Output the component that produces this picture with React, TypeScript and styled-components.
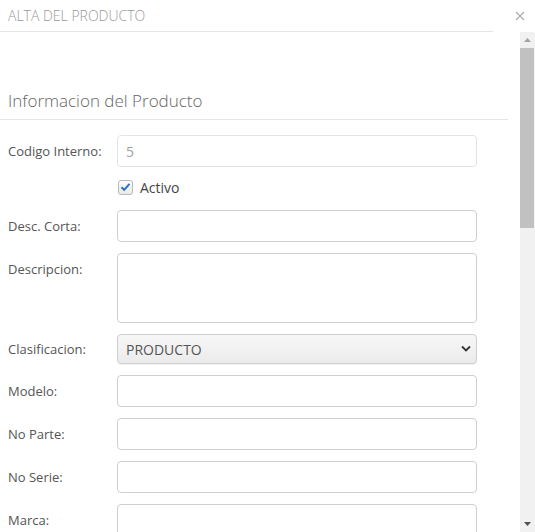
import React from "react";
import styled, { createGlobalStyle } from "styled-components";

const Global = createGlobalStyle`
  html, body { margin: 0; padding: 0; background: #fff; }
  body { font-family: "Open Sans", "Liberation Sans", sans-serif; color: #444; overflow: hidden; }
  * { box-sizing: border-box; }
`;

const Modal = styled.div`
  width: 535px;
  height: 532px;
  display: flex;
  flex-direction: column;
  background: #fff;
`;

const Header = styled.div`
  display: flex;
  height: 32px;
  flex: 0 0 32px;
`;

const HeaderTitle = styled.div`
  flex: 0 0 493px;
  border-bottom: 1px solid #e5e5e5;
  padding-left: 8px;
  font-size: 14px;
  font-weight: 300;
  color: #999;
  line-height: 31px;
`;

const Close = styled.button`
  flex: 1;
  border: 0;
  background: transparent;
  display: flex;
  align-items: center;
  justify-content: flex-end;
  padding: 0 10px 0 0;
  color: #aaa;
`;

const Main = styled.div`
  flex: 1;
  display: flex;
  min-height: 0;
`;

const Body = styled.div`
  flex: 1;
  overflow: hidden;
  padding: 0 12px 37px 0;
`;

const ScrollBar = styled.div`
  flex: 0 0 15px;
  display: flex;
  flex-direction: column;
  background: #f1f1f1;
`;

const ScrollButton = styled.div`
  flex: 0 0 16px;
  display: flex;
  align-items: center;
  justify-content: center;
`;

const Track = styled.div`
  flex: 1;
  display: flex;
  flex-direction: column;
`;

const Thumb = styled.div`
  height: 180px;
  margin: 0 1px 0 0;
  background: #c1c1c1;
`;

const Section = styled.div`
  padding-top: 56px;
`;

const SectionTitle = styled.h4`
  margin: 0 0 15px 0;
  padding: 0 0 5px 8px;
  border-bottom: 1px solid #e5e5e5;
  font-size: 17px;
  font-weight: 300;
  color: #666;
  line-height: 26px;
`;

const Row = styled.div`
  display: flex;
  align-items: flex-start;
  margin-bottom: 11px;
`;

const Label = styled.label<{ $h?: number }>`
  flex: 0 0 117px;
  padding-left: 8px;
  font-size: 13px;
  line-height: ${(p) => p.$h ?? 32}px;
  color: #555;
`;

const Input = styled.input<{ $readonly?: boolean }>`
  width: 360px;
  height: 32px;
  border: 1px solid ${(p) => (p.$readonly ? "#e3e3e3" : "#cfcfcf")};
  border-radius: 4px;
  padding: 0 8px;
  font-family: inherit;
  font-size: 14px;
  color: ${(p) => (p.$readonly ? "#a0a0a0" : "#444")};
  background: #fff;
  outline: none;
`;

const TextArea = styled.textarea`
  width: 360px;
  height: 70px;
  border: 1px solid #cfcfcf;
  border-radius: 4px;
  padding: 6px 8px;
  font-family: inherit;
  font-size: 14px;
  resize: none;
  outline: none;
`;

const SelectWrap = styled.div`
  position: relative;
  width: 360px;
  height: 30px;
`;

const Select = styled.select`
  width: 100%;
  height: 30px;
  appearance: none;
  -webkit-appearance: none;
  border: 1px solid #cfcfcf;
  border-radius: 4px;
  background: linear-gradient(#f7f7f7, #ebebeb);
  box-shadow: 0 1px 1px rgba(0,0,0,0.06);
  padding: 0 8px;
  font-family: inherit;
  font-size: 14px;
  color: #555;
  outline: none;
`;

const Chevron = styled.svg`
  position: absolute;
  right: 6px;
  top: 11px;
  pointer-events: none;
`;

const CheckRow = styled.div`
  display: flex;
  align-items: center;
  padding-left: 118px;
  height: 18px;
  margin-bottom: 14px;
`;

const Box = styled.span`
  width: 15px;
  height: 15px;
  border: 1px solid #b9b9b9;
  border-radius: 3px;
  background: linear-gradient(#fdfdfd, #e9e9e9);
  display: flex;
  align-items: center;
  justify-content: center;
  margin-right: 7px;
`;

const CheckText = styled.span`
  font-size: 14px;
  color: #444;
`;

const fields1 = ["Modelo:", "No Parte:", "No Serie:", "Marca:", "Unidad:", "Ubicacion:"];
const fields2 = [
  "Precio 1:", "Precio 2:", "Precio 3:", "Costo:", "Impuesto:", "Stock Min.:", "Stock Max.:",
  "Existencia:", "Peso:", "Proveedor:", "Categoria:", "Linea:", "Notas:",
];

export default function App() {
  return (
    <>
      <Global />
      <Modal>
        <Header>
          <HeaderTitle>ALTA DEL PRODUCTO</HeaderTitle>
          <Close aria-label="Cerrar">
            <svg width="10" height="10" viewBox="0 0 10 10">
              <path d="M1 1L9 9M9 1L1 9" stroke="#aaa" strokeWidth="1.1" />
            </svg>
          </Close>
        </Header>
        <Main>
          <Body>
            <Section>
              <SectionTitle>Informacion del Producto</SectionTitle>
              <Row>
                <Label>Codigo Interno:</Label>
                <Input $readonly readOnly defaultValue="5" />
              </Row>
              <CheckRow>
                <Box>
                  <svg width="11" height="10" viewBox="0 0 11 10">
                    <path d="M1.5 5.2L4.2 7.8L9.5 1.8" stroke="#2f6fc0" strokeWidth="2" fill="none" />
                  </svg>
                </Box>
                <CheckText>Activo</CheckText>
              </CheckRow>
              <Row>
                <Label>Desc. Corta:</Label>
                <Input />
              </Row>
              <Row>
                <Label>Descripcion:</Label>
                <TextArea />
              </Row>
              <Row>
                <Label $h={30}>Clasificacion:</Label>
                <SelectWrap>
                  <Select defaultValue="PRODUCTO">
                    <option>PRODUCTO</option>
                    <option>SERVICIO</option>
                  </Select>
                  <Chevron width="10" height="7" viewBox="0 0 10 7">
                    <path d="M1 1.5L5 5.5L9 1.5" stroke="#333" strokeWidth="1.8" fill="none" />
                  </Chevron>
                </SelectWrap>
              </Row>
              {fields1.map((f) => (
                <Row key={f}>
                  <Label>{f}</Label>
                  <Input />
                </Row>
              ))}
            </Section>
            <Section>
              <SectionTitle>Precios e Inventario</SectionTitle>
              {fields2.map((f) => (
                <Row key={f}>
                  <Label>{f}</Label>
                  <Input />
                </Row>
              ))}
            </Section>
          </Body>
          <ScrollBar>
            <ScrollButton>
              <svg width="7" height="4" viewBox="0 0 7 4">
                <path d="M0 4L3.5 0L7 4Z" fill="#a3a3a3" />
              </svg>
            </ScrollButton>
            <Track>
              <Thumb />
            </Track>
            <ScrollButton>
              <svg width="7" height="4" viewBox="0 0 7 4">
                <path d="M0 0L3.5 4L7 0Z" fill="#505050" />
              </svg>
            </ScrollButton>
          </ScrollBar>
        </Main>
      </Modal>
    </>
  );
}
